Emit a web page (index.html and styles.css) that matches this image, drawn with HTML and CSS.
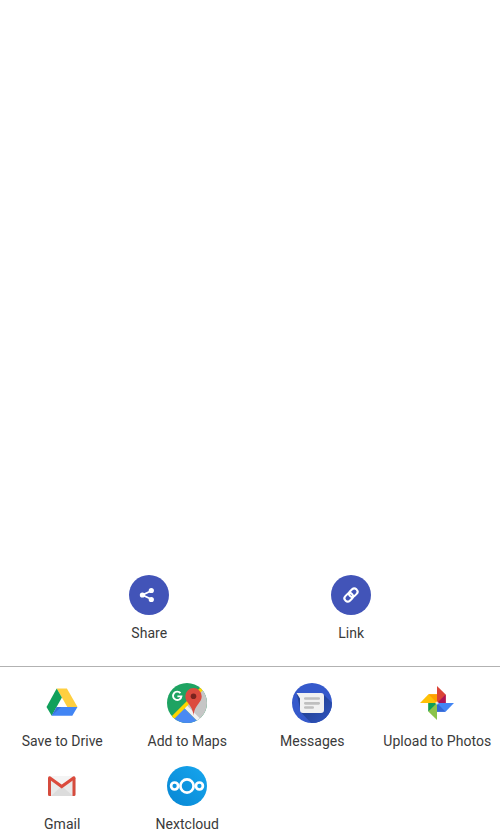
FILE: index.html
```html
<!DOCTYPE html>
<html lang="en">
<head>
<meta charset="utf-8">
<title>Share</title>
<link rel="stylesheet" href="styles.css">
</head>
<body>
<main class="sheet">
  <section class="actions">
    <div class="item">
      <svg class="icon" viewBox="0 0 40 40"><circle cx="20" cy="20" r="20" fill="#4254b8"/><path d="M23 15.500 13.500 20l9.500 4.500" fill="none" stroke="#fff" stroke-width="1.900"/><g fill="#fff"><circle cx="22.300" cy="15.500" r="2.600"/><circle cx="13.400" cy="20" r="2.600"/><circle cx="22.300" cy="24.500" r="2.600"/></g></svg>
      <span class="label">Share</span>
    </div>
    <div class="item">
      <svg class="icon" viewBox="0 0 40 40"><circle cx="20" cy="20" r="20" fill="#4254b8"/><g transform="rotate(-45 20 20)" fill="none" stroke="#fff" stroke-width="2.100"><rect x="12.200" y="16.800" width="9.200" height="6.400" rx="3"/><rect x="18.600" y="16.800" width="9.200" height="6.400" rx="3"/></g></svg>
      <span class="label">Link</span>
    </div>
  </section>
  <section class="apps">
    <div class="item">
      <svg class="icon" viewBox="0 0 40 40"><path d="M14.700 5.500h10.200L35.500 24H25.300z" fill="#ffcf40"/><path d="m14.700 5.500 5.200 9L9.700 32.800 4.500 24z" fill="#11a05c"/><path d="M14.700 24h20.800l-5.200 8.800H9.700z" fill="#4285f4"/><path d="m14.700 24 4.500 0-9.500 8.800z" fill="#3871da"/></svg>
      <span class="label">Save to Drive</span>
    </div>
    <div class="item">
      <svg class="icon" viewBox="0 0 40 40"><defs><clipPath id="round"><circle cx="20" cy="20" r="20"/></clipPath></defs><g clip-path="url(#round)"><path d="M0 0h40v40H0z" fill="#1ea362"/><path d="M40 1 17 25l15 15h8z" fill="#c6c6c6"/><path d="M17 25 1 41h32z" fill="#4a89f3"/><path d="m18.500 23.500 17 17" stroke="#f2f2f2" stroke-width="3.500"/><path d="M2 38.500 37 3.500" stroke="#ffd500" stroke-width="3.700"/></g><path d="M26.500 5a8.200 8.200 0 0 0-8.200 8.200c0 3 1.300 5 3.100 7.300 2.500 3.200 4.500 6.300 5.100 12 .6-5.700 2.600-8.800 5.100-12 1.800-2.300 3.100-4.300 3.100-7.300A8.200 8.200 0 0 0 26.500 5z" fill="#dc4b3e"/><circle cx="26.500" cy="13.300" r="2.800" fill="#7a231e"/><path d="M13.500 10.200A4.200 4.200 0 1 0 14.400 13.400H10.400" fill="none" stroke="#fff" stroke-width="1.900"/></svg>
      <span class="label">Add to Maps</span>
    </div>
    <div class="item">
      <svg class="icon" viewBox="0 0 40 40"><defs><linearGradient id="shade" x1="0" y1="0" x2="1" y2="1"><stop offset=".35" stop-color="#234398"/><stop offset=".95" stop-color="#3358c8"/></linearGradient><clipPath id="disc"><circle cx="20" cy="20" r="20"/></clipPath></defs><circle cx="20" cy="20" r="20" fill="#3559cb"/><path d="M4.500 10 31 11 45 24.500V45H24L9 29.500z" fill="url(#shade)" clip-path="url(#disc)"/><path d="M4.500 10H29a3 3 0 0 1 3 3v14a3 3 0 0 1-3 3H11a3 3 0 0 1-3-3V15.500z" fill="#f1f1f1"/><path d="M13.300 15.500h13.400M13.300 20.300h13.400M13.300 24.500h7.400" stroke="#bfbfbf" stroke-width="2.700" stroke-linecap="round"/></svg>
      <span class="label">Messages</span>
    </div>
    <div class="item">
      <svg class="icon" viewBox="0 0 40 40"><path d="m20 3 8.700 8.500V20H20z" fill="#db4437"/><path d="m20 20 8.700-8.500V20z" fill="#ad1457"/><path d="M37 20l-8.500 8.700H20V20z" fill="#4285f4"/><path d="M20 20l8.500 8.700H20z" fill="#3367d6"/><path d="m20 37-8.700-8.500V20H20z" fill="#8bc34a"/><path d="m20 20-8.700 8.500V20z" fill="#0f9d58"/><path d="m3 20 8.500-8.700H20V20z" fill="#ffc107"/><path d="m20 20-8.500-8.700H20z" fill="#ffa000"/><circle cx="20" cy="20" r="1.600" fill="#fff" opacity=".75"/></svg>
      <span class="label">Upload to Photos</span>
    </div>
    <div class="item">
      <svg class="icon" viewBox="0 0 40 40"><rect x="6" y="10" width="27.500" height="20" rx="1.500" fill="#e9e9e9"/><path d="M9 30 19.700 20 31 30z" fill="#dcdcdc"/><path d="M7 10h25.500L19.700 19.500z" fill="#f4f4f4"/><path d="M9 12v18H7.500A1.500 1.500 0 0 1 6 28.500V12zM33.500 12v16.500A1.500 1.500 0 0 1 32 30h-1.500V12z" fill="#d54b3d"/><path d="m7.600 11.800 12.100 8.700 12.200-8.700" fill="none" stroke="#db4a3c" stroke-width="3.100" stroke-linecap="round"/></svg>
      <span class="label">Gmail</span>
    </div>
    <div class="item">
      <svg class="icon" viewBox="0 0 40 40"><defs><linearGradient id="cloud" x1="1" y1="0" x2="0" y2="1"><stop stop-color="#16a6ee"/><stop offset="1" stop-color="#0786d3"/></linearGradient></defs><circle cx="20" cy="20" r="20" fill="url(#cloud)"/><g fill="none" stroke="#fff" stroke-width="2.700"><circle cx="20" cy="20" r="6.600"/><circle cx="7.600" cy="20" r="3.500"/><circle cx="32.400" cy="20" r="3.500"/></g></svg>
      <span class="label">Nextcloud</span>
    </div>
  </section>
</main>
</body>
</html>
```
FILE: styles.css
```css
body {
  margin: 0;
  background: #fff;
  color: #3a3a3a;
  font-family: Roboto, sans-serif;
}

.sheet {
  display: flex;
  flex-direction: column;
  justify-content: flex-end;
  height: 833px;
  overflow: hidden;
}

.actions {
  display: grid;
  grid-template-columns: 1fr 1fr;
  padding: 0 48px 23px;
}

.apps {
  display: grid;
  grid-template-columns: repeat(4, 1fr);
  row-gap: 15px;
  height: 150px;
  padding-top: 16px;
  border-top: 1px solid #b2b2b2;
  grid-auto-rows: 68px;
}

.item {
  display: flex;
  flex-direction: column;
  align-items: center;
  height: 68px;
}

.apps .item {
  padding-right: 1px;
}

.icon {
  flex: none;
  width: 40px;
  height: 40px;
}

.label {
  margin-top: 8px;
  padding-left: 0.5px;
  font-size: 14px;
  line-height: 20px;
  letter-spacing: 0.03px;
  white-space: nowrap;
}
```
